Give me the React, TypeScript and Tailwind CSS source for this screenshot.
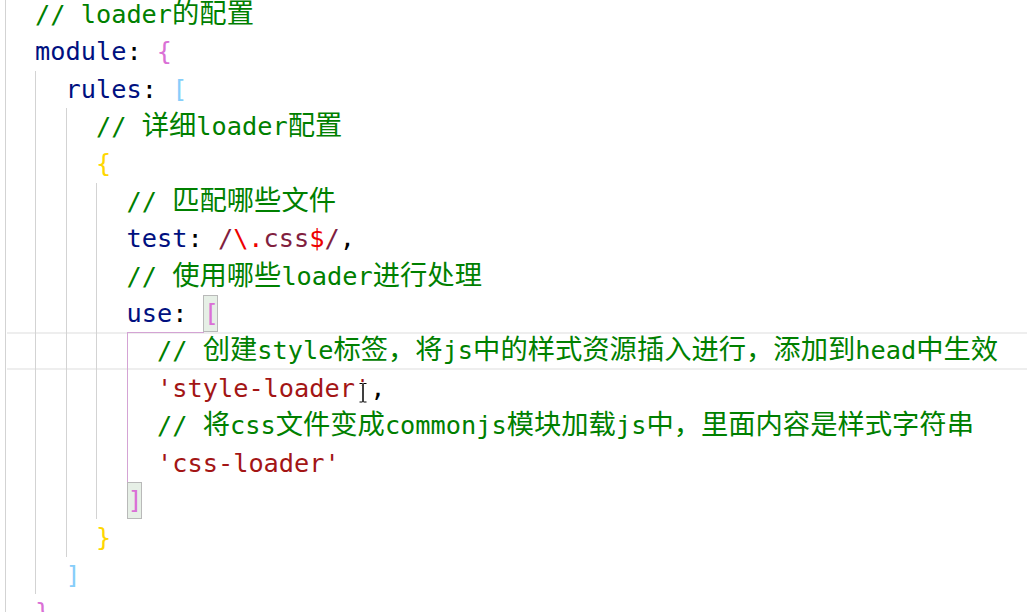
import React from "react";

type Tok = { t: string; c: string; match?: boolean };
type Line = { indent: number; toks: Tok[]; active?: boolean; cursor?: boolean };

const COMMENT = "text-[#008000]";
const PROP = "text-[#001080]";
const PUNC = "text-[#000000]";
const STR = "text-[#a31515]";
const RE = "text-[#811f3f]";
const RE_ESC = "text-[#ee0000]";
const ORCHID = "text-[#da70d6]";
const SKY = "text-[#87cefa]";
const GOLD = "text-[#ffd700]";

const lines: Line[] = [
  { indent: 2, toks: [{ t: "// loader的配置", c: COMMENT }] },
  { indent: 2, toks: [{ t: "module", c: PROP }, { t: ": ", c: PUNC }, { t: "{", c: ORCHID }] },
  { indent: 4, toks: [{ t: "rules", c: PROP }, { t: ": ", c: PUNC }, { t: "[", c: SKY }] },
  { indent: 6, toks: [{ t: "// 详细loader配置", c: COMMENT }] },
  { indent: 6, toks: [{ t: "{", c: GOLD }] },
  { indent: 8, toks: [{ t: "// 匹配哪些文件", c: COMMENT }] },
  {
    indent: 8,
    toks: [
      { t: "test", c: PROP },
      { t: ": ", c: PUNC },
      { t: "/", c: RE },
      { t: "\\.", c: RE_ESC },
      { t: "css", c: RE },
      { t: "$", c: RE_ESC },
      { t: "/", c: RE },
      { t: ",", c: PUNC },
    ],
  },
  { indent: 8, toks: [{ t: "// 使用哪些loader进行处理", c: COMMENT }] },
  { indent: 8, toks: [{ t: "use", c: PROP }, { t: ": ", c: PUNC }, { t: "[", c: ORCHID, match: true }] },
  { indent: 10, active: true, toks: [{ t: "// 创建style标签，将js中的样式资源插入进行，添加到head中生效", c: COMMENT }] },
  { indent: 10, cursor: true, toks: [{ t: "'style-loader", c: STR }, { t: "'", c: STR }, { t: ",", c: PUNC }] },
  { indent: 10, toks: [{ t: "// 将css文件变成commonjs模块加载js中，里面内容是样式字符串", c: COMMENT }] },
  { indent: 10, toks: [{ t: "'css-loader'", c: STR }] },
  { indent: 8, toks: [{ t: "]", c: ORCHID, match: true }] },
  { indent: 6, toks: [{ t: "}", c: GOLD }] },
  { indent: 4, toks: [{ t: "]", c: SKY }] },
  { indent: 2, toks: [{ t: "}", c: ORCHID }] },
];

// lines 10-13 sit inside the active bracket pair of `use: [`
const ACTIVE_GUIDE_FROM = 9;
const ACTIVE_GUIDE_TO = 12;

function splitCjk(text: string) {
  return text.split(/([\u3000-\u303f\u4e00-\u9fff\uff00-\uffef]+)/).filter(Boolean);
}

function IBeam() {
  return (
    <svg
      className="absolute left-[3px] top-[8px] pointer-events-none"
      width="10"
      height="22"
      viewBox="0 0 10 22"
    >
      <path
        d="M1.5 1.5h2.5c.6 0 1 .4 1 1v16.5c0 .6-.4 1-1 1H1.5 M8.5 1.5H6c-.6 0-1 .4-1 1v16.5c0 .6.4 1 1 1h2.5"
        stroke="#ffffff"
        strokeWidth="3"
        fill="none"
      />
      <path
        d="M1.5 1.5h2.5c.6 0 1 .4 1 1v16.5c0 .6-.4 1-1 1H1.5 M8.5 1.5H6c-.6 0-1 .4-1 1v16.5c0 .6.4 1 1 1h2.5"
        stroke="#000000"
        strokeWidth="1"
        fill="none"
      />
    </svg>
  );
}

function TokenView({ tok, cursor }: { tok: Tok; cursor: boolean }) {
  if (tok.match) {
    return (
      <span className={`inline-block h-[37.4px] w-[15.25px] border border-[#b9b9b9] bg-[#e6efe6] text-center align-top leading-[35.4px] ${tok.c}`}>
        {tok.t}
      </span>
    );
  }
  if (cursor) {
    return (
      <span className={`relative ${tok.c}`}>
        {tok.t}
        <IBeam />
      </span>
    );
  }
  return (
    <span className={tok.c}>
      {splitCjk(tok.t).map((part, i) =>
        /[\u3000-\u303f\u4e00-\u9fff\uff00-\uffef]/.test(part) ? (
          <span key={i} className="font-['Noto_Sans_CJK_SC',sans-serif] text-[27.3px] leading-none">
            {part}
          </span>
        ) : (
          <span key={i}>{part}</span>
        )
      )}
    </span>
  );
}

function CodeLine({ line, index }: { line: Line; index: number }) {
  const levels = Math.floor(line.indent / 2);
  const guides = [];
  // guide at column 0 is drawn before the highlight box starts
  for (let g = 1; g < levels; g++) {
    const activeGuide = g === 4 && index >= ACTIVE_GUIDE_FROM && index <= ACTIVE_GUIDE_TO;
    guides.push(
      <span
        key={g}
        className={`relative h-full w-[30.5px] shrink-0 border-l ${activeGuide ? "border-[#d4a3d4]" : "border-[#d3d3d3]"}`}
      >
        {activeGuide && index === ACTIVE_GUIDE_FROM && (
          <span className="absolute -left-px top-0 h-px w-[77px] bg-[#d4a3d4]" />
        )}
      </span>
    );
  }

  return (
    <div className="flex h-[37.4px]">
      <div className="w-[4.5px] shrink-0" />
      <span className="h-full w-[2.5px] shrink-0 border-l border-[#d3d3d3]" />
      <div
        className={`flex flex-1 ${line.active ? "shadow-[inset_0_2px_0_#eeeeee,inset_0_-2px_0_#eeeeee]" : ""}`}
      >
        <span className="w-[28px] shrink-0" />
        {guides}
        <div className="whitespace-pre">
          {line.toks.map((tok, i) => (
            <TokenView key={i} tok={tok} cursor={!!line.cursor && i === 1} />
          ))}
        </div>
      </div>
    </div>
  );
}

export default function App() {
  return (
    <div className="h-[612px] w-[1027px] overflow-hidden bg-white font-['DejaVu_Sans_Mono',monospace] text-[25.3px] leading-[37.4px]">
      <div className="-mt-[4.2px]">
        {lines.map((line, i) => (
          <CodeLine key={i} line={line} index={i} />
        ))}
      </div>
    </div>
  );
}
